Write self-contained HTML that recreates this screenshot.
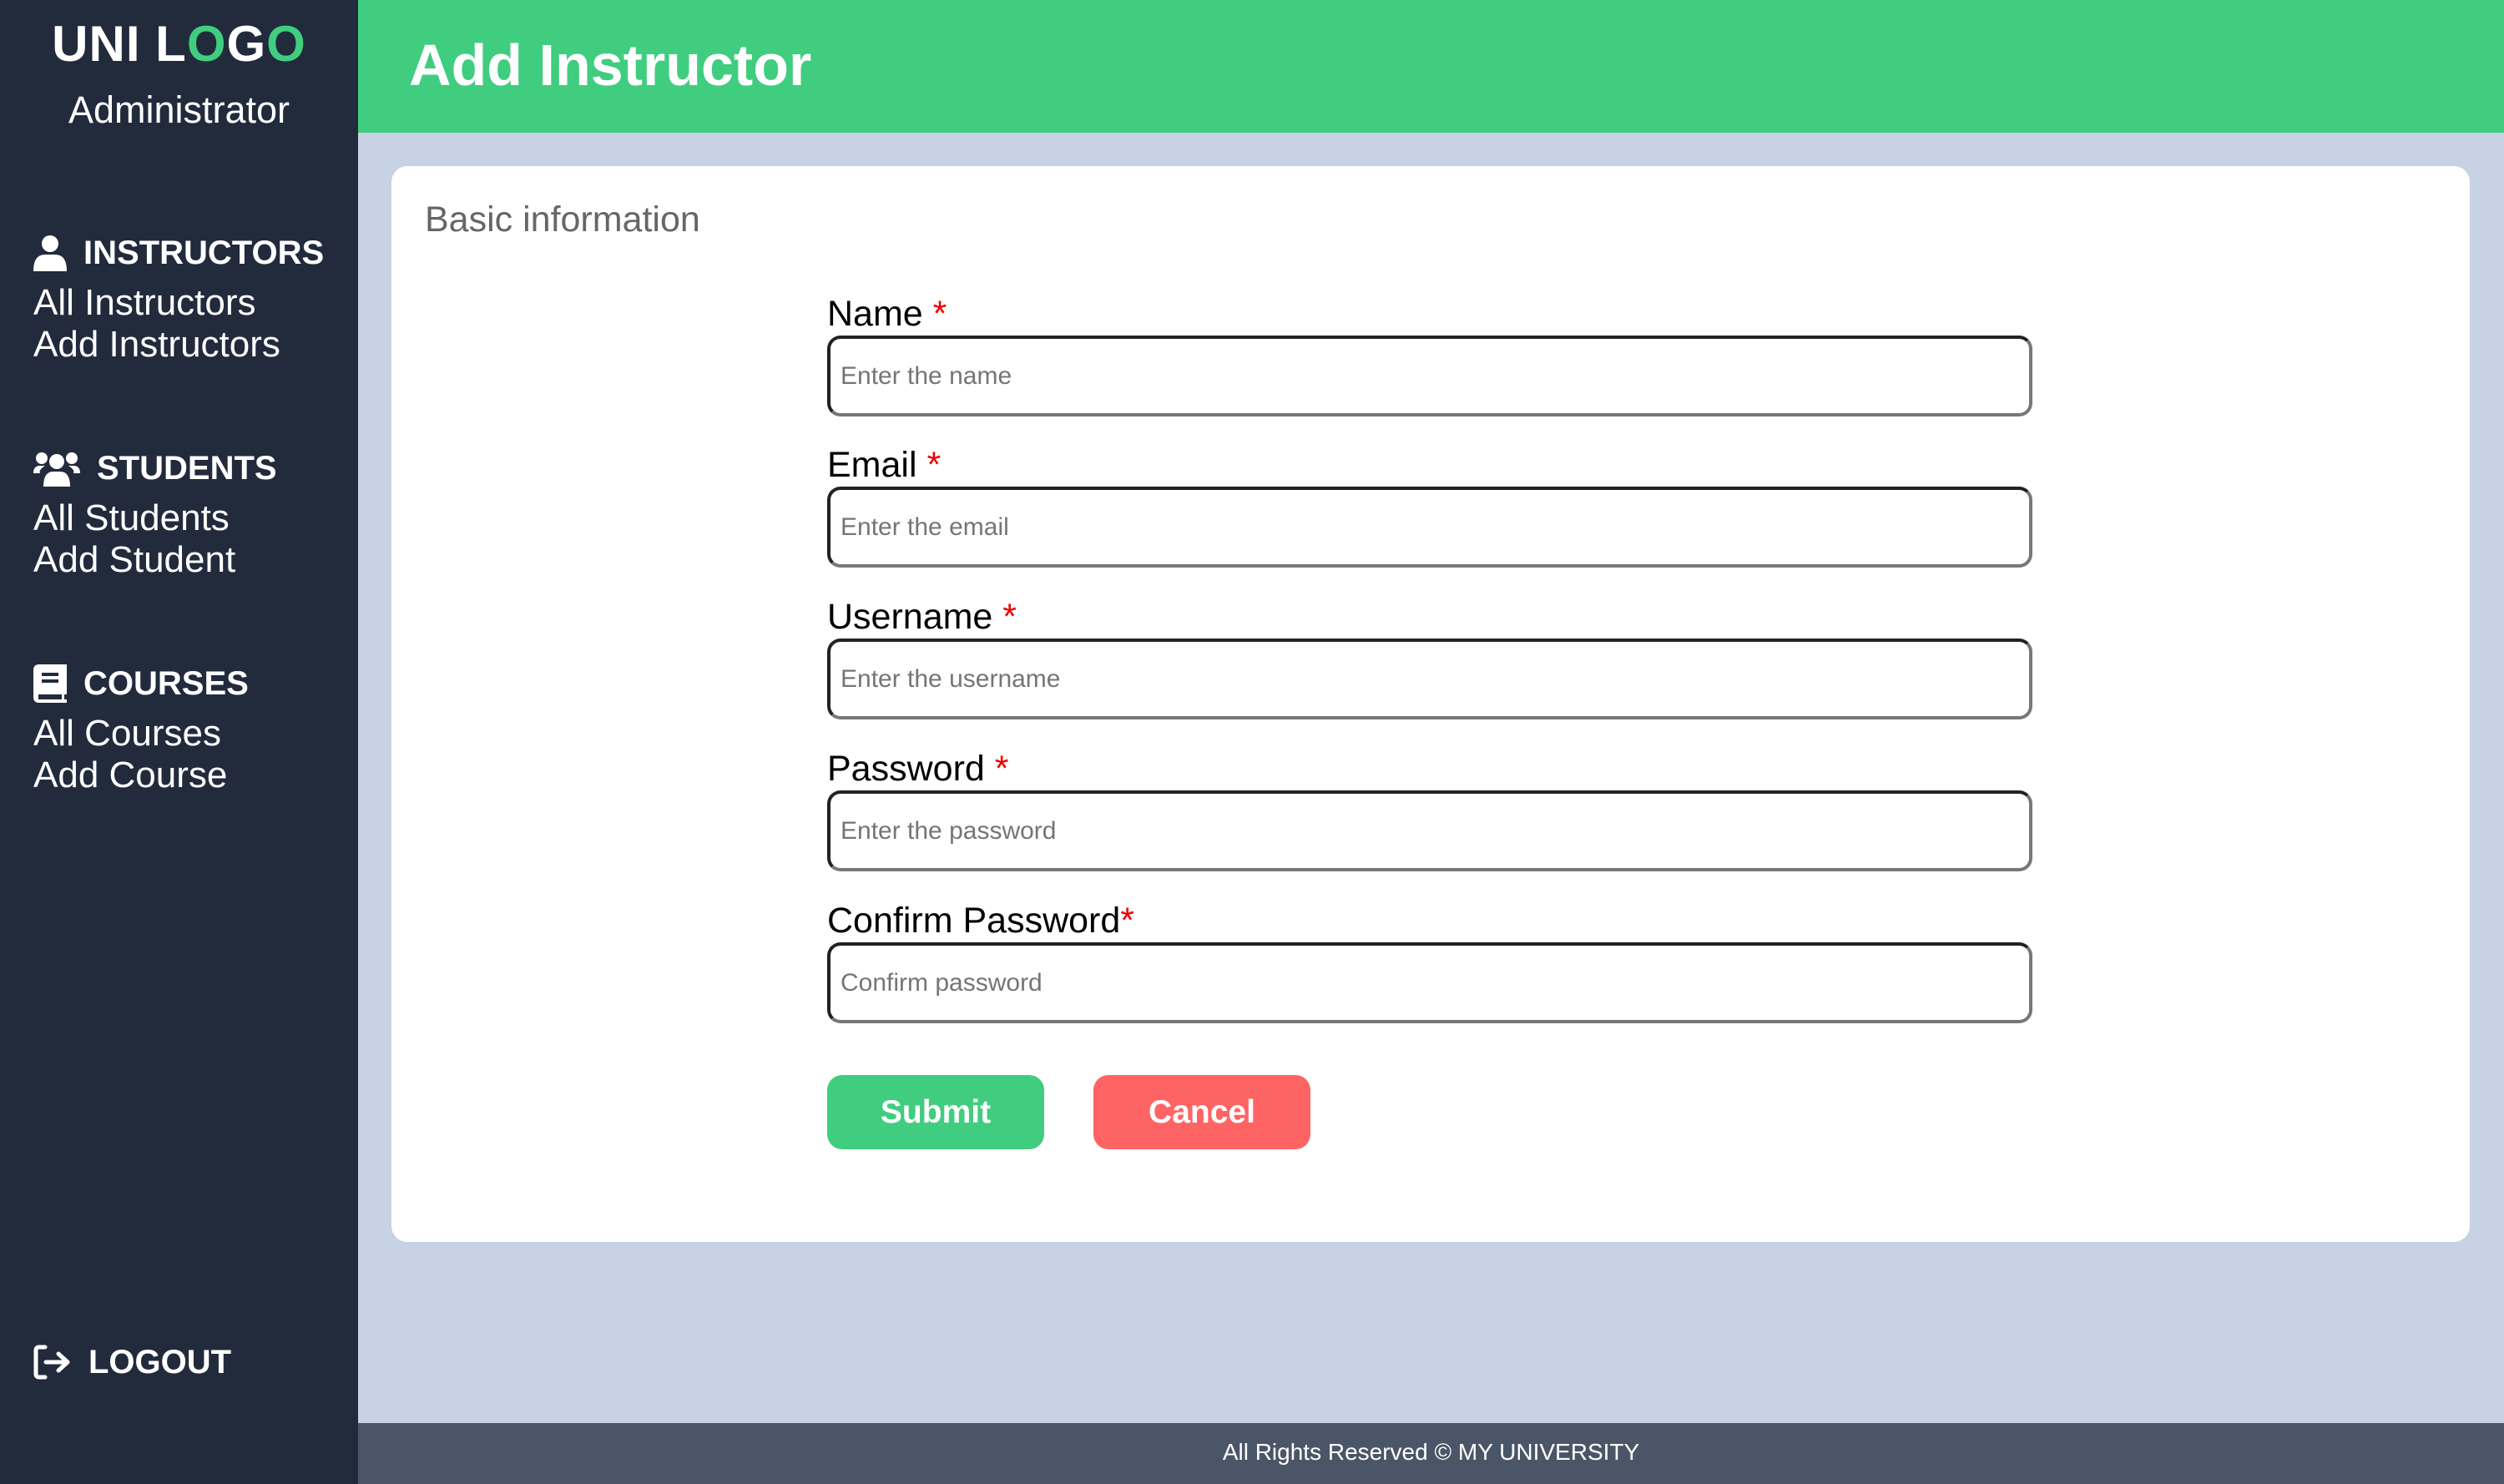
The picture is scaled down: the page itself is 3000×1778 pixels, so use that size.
<!DOCTYPE html>
<html><head><meta charset="utf-8"><style>
*{margin:0;padding:0;box-sizing:border-box}
body{width:3000px;height:1778px;overflow:hidden;font-family:"Liberation Sans",sans-serif;background:#c7d2e4;position:relative}
.side{position:absolute;left:0;top:0;width:429px;height:1778px;background:#222b3c;color:#fff}
.logo{position:absolute;top:18px;width:429px;text-align:center;font-weight:bold;font-size:60px;letter-spacing:1px}
.logo span{color:#40cd7f}
.admin{position:absolute;top:106px;width:429px;text-align:center;font-size:45px}
.sec{position:absolute;left:40px}
.h{font-weight:bold;font-size:40px;height:50px;display:flex;align-items:center;margin-bottom:10px}
.h svg{margin-right:20px}
.it{font-size:44px;line-height:50px}
.head{position:absolute;left:429px;top:0;right:0;height:159px;background:#40cd7f;color:#fff;font-weight:bold;font-size:70px;padding:38px 0 0 61px}
.card{position:absolute;left:469px;top:199px;width:2490px;height:1289px;background:#fff;border-radius:19px}
.bi{position:absolute;left:40px;top:40px;font-size:43px;color:#666}
.f{position:absolute;left:522px}
.f label{display:block;font-size:43px;color:#000;height:52px;line-height:52px}
.f label b{color:#e00;font-weight:normal}
.inp{width:1444px;height:97px;border:4px solid #222;border-bottom-color:#777;border-right-color:#777;border-radius:16px;font-size:30px;color:#757575;padding:0 0 0 12px;line-height:89px}
.btn{position:absolute;top:1089px;width:260px;height:89px;border-radius:18px;color:#fff;font-weight:bold;font-size:39px;text-align:center;line-height:89px}
.foot{position:absolute;left:429px;right:0;top:1705px;height:73px;background:#4a5667;color:#fff;font-size:28px;text-align:center;line-height:70px}
</style></head><body>
<div class="side">
<div class="logo">UNI L<span>O</span>G<span>O</span></div>
<div class="admin">Administrator</div>
<div class="sec" style="top:278px">
<div class="h"><svg width="40" height="44" viewBox="0 0 40 44"><circle cx="20" cy="11" r="10" fill="#fff"/><path d="M0 44 Q0 24 14 24 H26 Q40 24 40 44Z" fill="#fff"/></svg>INSTRUCTORS</div>
<div class="it">All Instructors</div><div class="it">Add Instructors</div></div>
<div class="sec" style="top:536px">
<div class="h"><svg width="56" height="44" viewBox="0 0 56 44"><circle cx="10" cy="10" r="7" fill="#fff"/><circle cx="46" cy="10" r="7" fill="#fff"/><circle cx="28" cy="14" r="9" fill="#fff"/><path d="M0 28 Q0 19 8 19 H14 Q6 24 8 28Z M56 28 Q56 19 48 19 H42 Q50 24 48 28Z M12 44 Q12 26 24 26 H32 Q44 26 44 44Z" fill="#fff"/></svg>STUDENTS</div>
<div class="it">All Students</div><div class="it">Add Student</div></div>
<div class="sec" style="top:794px">
<div class="h"><svg width="40" height="46" viewBox="0 0 40 46"><path d="M7 0 H40 V36 H37 V42 H40 V46 H7 Q0 46 0 39 V7 Q0 0 7 0Z" fill="#fff"/><rect x="10" y="10" width="20" height="4" fill="#222b3c"/><rect x="10" y="18" width="20" height="4" fill="#222b3c"/><path d="M6 36 H34 V42 H6Z" fill="#222b3c"/></svg>COURSES</div>
<div class="it">All Courses</div><div class="it">Add Course</div></div>
<div class="sec" style="top:1607px">
<div class="h"><svg width="46" height="42" viewBox="0 0 46 42" fill="none" stroke="#fff" stroke-width="5" stroke-linecap="round" stroke-linejoin="round"><path d="M14 3 H7 Q3 3 3 7 V35 Q3 39 7 39 H14"/><path d="M15 21 H40 M30 11 L41 21 L30 31"/></svg>LOGOUT</div></div>
</div>
<div class="head">Add Instructor</div>
<div class="card">
<div class="bi">Basic information</div>
<div class="f" style="top:151px"><label>Name <b>*</b></label><div class="inp">Enter the name</div></div>
<div class="f" style="top:332px"><label>Email <b>*</b></label><div class="inp">Enter the email</div></div>
<div class="f" style="top:514px"><label>Username <b>*</b></label><div class="inp">Enter the username</div></div>
<div class="f" style="top:696px"><label>Password <b>*</b></label><div class="inp">Enter the password</div></div>
<div class="f" style="top:878px"><label>Confirm Password<b>*</b></label><div class="inp">Confirm password</div></div>
<div class="btn" style="left:522px;background:#40cd7f">Submit</div>
<div class="btn" style="left:841px;background:#ff6464">Cancel</div>
</div>
<div class="foot">All Rights Reserved © MY UNIVERSITY</div>
</body></html>
